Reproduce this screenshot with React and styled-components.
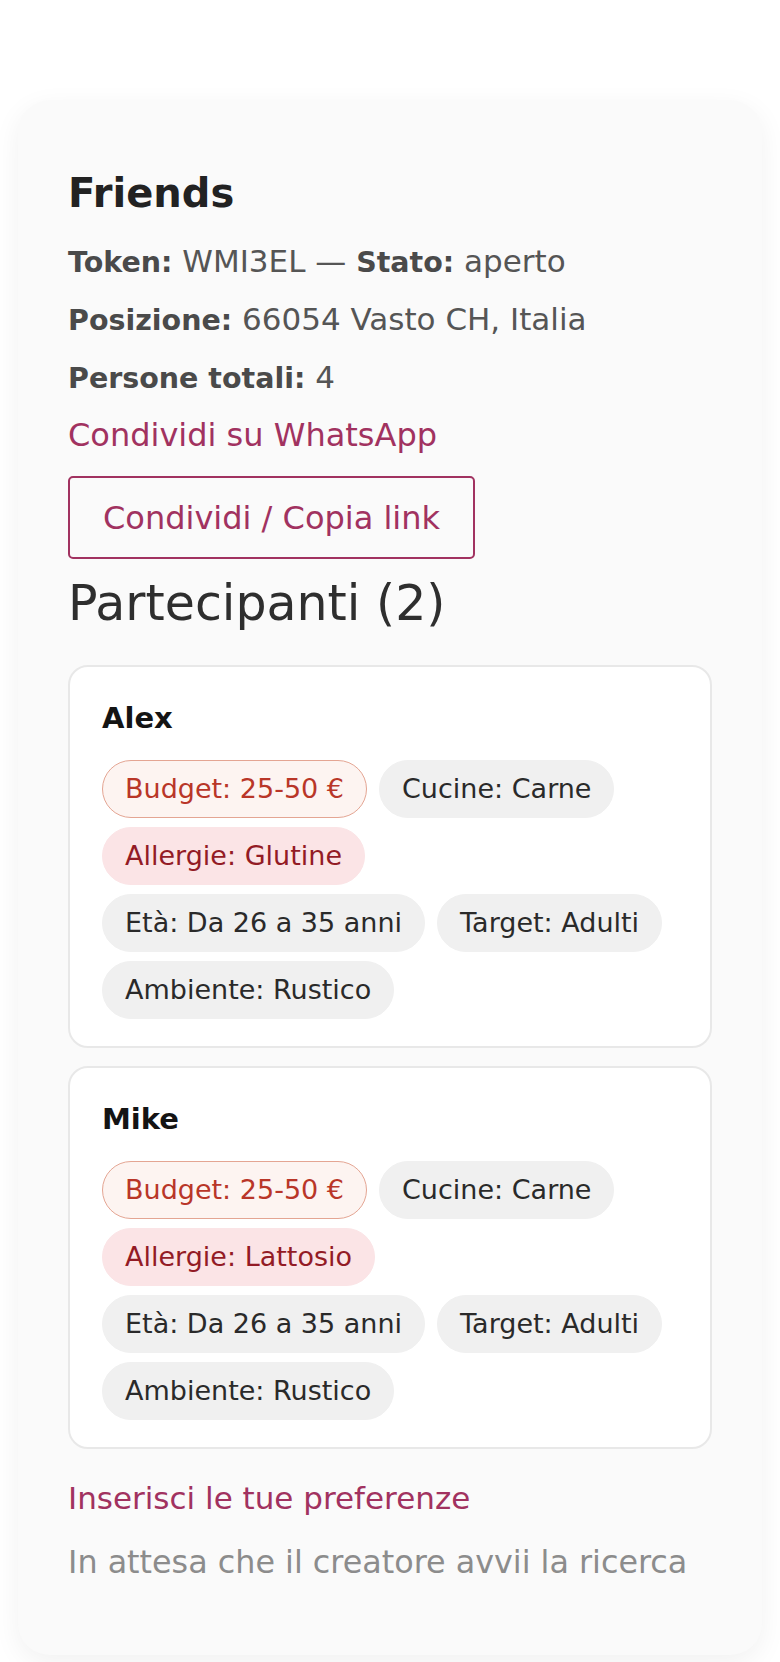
import React from "react";
import styled, { createGlobalStyle } from "styled-components";

const Global = createGlobalStyle`
  html, body { margin: 0; padding: 0; background: #ffffff; }
  body { font-family: "DejaVu Sans", "Noto Sans", sans-serif; color: #333; }
  * { box-sizing: border-box; }
`;

const Page = styled.div`
  padding: 100px 18px 10px;
`;

const Panel = styled.section`
  background: #fafafa;
  border-radius: 32px;
  box-shadow: 0 8px 28px rgba(0, 0, 0, 0.06);
  padding: 70px 50px 73px;
  display: flex;
  flex-direction: column;
`;

const Title = styled.h2`
  margin: 0 0 24px;
  font-size: 40px;
  line-height: 47px;
  font-weight: 700;
  color: #222;
`;

const InfoLine = styled.p`
  margin: 0 0 18px;
  height: 40px;
  font-size: 31px;
  line-height: 40px;
  color: #555;
  white-space: nowrap;
  strong { font-weight: 700; font-size: 28.5px; line-height: 1; color: #4a4a4a; }
`;

const TextLink = styled.a`
  display: block;
  font-size: ${(p) => p.$size || 32}px;
  line-height: 40px;
  color: #a13260;
  text-decoration: none;
  white-space: nowrap;
`;

const OutlineButton = styled.button`
  align-self: flex-start;
  margin-top: 21px;
  padding: 19.5px 33px;
  border: 2px solid #a13260;
  border-radius: 5px;
  background: transparent;
  font-family: inherit;
  font-size: 32px;
  line-height: 40px;
  color: #a13260;
  white-space: nowrap;
`;

const SectionTitle = styled.h3`
  margin: 15px 0 32px;
  font-size: 49px;
  line-height: 59px;
  font-weight: 400;
  color: #2e2e2e;
`;

const CardList = styled.div`
  display: flex;
  flex-direction: column;
  gap: 18px;
`;

const PersonCard = styled.article`
  background: #ffffff;
  border: 2px solid #e8e8e8;
  border-radius: 20px;
  padding: 31px 32px 27px;
`;

const PersonName = styled.h4`
  margin: 0 0 22px;
  font-size: 29px;
  line-height: 40px;
  font-weight: 700;
  color: #141414;
`;

const Tags = styled.div`
  display: flex;
  flex-wrap: wrap;
  column-gap: 12px;
  row-gap: 9px;
`;

const tagTones = {
  budget: { bg: "#fdf4f1", border: "#e4a593", color: "#b93628" },
  allergy: { bg: "#fbe4e6", border: "#fbe4e6", color: "#931b25" },
  neutral: { bg: "#f0f0f0", border: "#f0f0f0", color: "#2a2a2a" },
};

const Tag = styled.span`
  display: inline-block;
  padding: 9px 22px;
  border-radius: 999px;
  border: 1px solid ${(p) => tagTones[p.$tone].border};
  background: ${(p) => tagTones[p.$tone].bg};
  color: ${(p) => tagTones[p.$tone].color};
  font-size: 27px;
  line-height: 38px;
  white-space: nowrap;
`;

const Footer = styled.div`
  margin-top: 29px;
  display: flex;
  flex-direction: column;
  gap: 24px;
`;

const Muted = styled.p`
  margin: 0;
  font-size: 31.8px;
  line-height: 40px;
  color: #8c8c8c;
  white-space: nowrap;
`;

const people = [
  { name: "Alex", allergy: "Glutine" },
  { name: "Mike", allergy: "Lattosio" },
];

export default function App() {
  return (
    <>
      <Global />
      <Page>
        <Panel>
          <Title>Friends</Title>
          <InfoLine>
            <strong>Token:</strong> WMI3EL — <strong>Stato:</strong> aperto
          </InfoLine>
          <InfoLine>
            <strong>Posizione:</strong> 66054 Vasto CH, Italia
          </InfoLine>
          <InfoLine>
            <strong>Persone totali:</strong> 4
          </InfoLine>
          <TextLink href="#">Condividi su WhatsApp</TextLink>
          <OutlineButton type="button">Condividi / Copia link</OutlineButton>
          <SectionTitle>Partecipanti (2)</SectionTitle>
          <CardList>
            {people.map((p) => (
              <PersonCard key={p.name}>
                <PersonName>{p.name}</PersonName>
                <Tags>
                  <Tag $tone="budget">Budget: 25-50 €</Tag>
                  <Tag $tone="neutral">Cucine: Carne</Tag>
                  <Tag $tone="allergy">Allergie: {p.allergy}</Tag>
                  <Tag $tone="neutral">Età: Da 26 a 35 anni</Tag>
                  <Tag $tone="neutral">Target: Adulti</Tag>
                  <Tag $tone="neutral">Ambiente: Rustico</Tag>
                </Tags>
              </PersonCard>
            ))}
          </CardList>
          <Footer>
            <TextLink href="#" $size={31}>Inserisci le tue preferenze</TextLink>
            <Muted>In attesa che il creatore avvii la ricerca</Muted>
          </Footer>
        </Panel>
      </Page>
    </>
  );
}
